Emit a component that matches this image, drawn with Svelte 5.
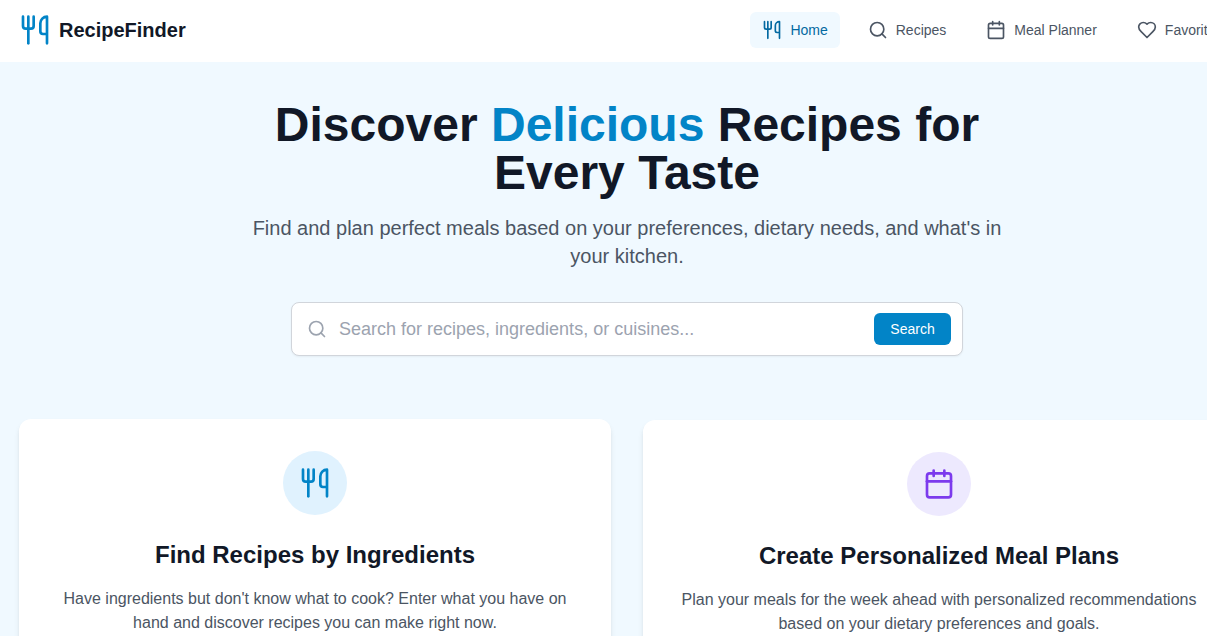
<script>
  const navItems = [
    { label: 'Home', icon: 'utensils', active: true },
    { label: 'Recipes', icon: 'search', active: false },
    { label: 'Meal Planner', icon: 'calendar', active: false },
    { label: 'Favorites', icon: 'heart', active: false }
  ];
</script>

{#snippet icon(name, size, cls)}
  <svg class={cls} width={size} height={size} viewBox="0 0 24 24" fill="none" stroke="currentColor" stroke-width="2" stroke-linecap="round" stroke-linejoin="round" aria-hidden="true">
    {#if name === 'utensils'}
      <path d="M3 2v7c0 1.1.9 2 2 2h4a2 2 0 0 0 2-2V2" />
      <path d="M7 2v20" />
      <path d="M21 15V2a5 5 0 0 0-5 5v6c0 1.1.9 2 2 2h3Zm0 0v7" />
    {:else if name === 'search'}
      <circle cx="11" cy="11" r="8" />
      <path d="m21 21-4.3-4.3" />
    {:else if name === 'calendar'}
      <path d="M8 2v4" />
      <path d="M16 2v4" />
      <rect width="18" height="18" x="3" y="4" rx="2" />
      <path d="M3 10h18" />
    {:else}
      <path d="M19 14c1.49-1.46 3-3.21 3-5.5A5.5 5.5 0 0 0 16.5 3c-1.76 0-3 .5-4.5 2-1.5-1.5-2.74-2-4.5-2A5.5 5.5 0 0 0 2 8.5c0 2.3 1.5 4.05 3 5.5l7 7Z" />
    {/if}
  </svg>
{/snippet}

<div class="viewport">
  <div class="page">
    <header class="topbar">
      <a class="brand" href="#home">
        {@render icon('utensils', 32, 'brand-icon')}
        <span>RecipeFinder</span>
      </a>
      <nav class="nav">
        {#each navItems as item}
          <a class="nav-link" class:active={item.active} href="#{item.label}">
            {@render icon(item.icon, 20, '')}
            <span>{item.label}</span>
          </a>
        {/each}
      </nav>
    </header>

    <main class="main">
      <section class="hero">
        <h1>Discover <span class="accent">Delicious</span> Recipes for Every Taste</h1>
        <p class="lead">Find and plan perfect meals based on your preferences, dietary needs, and what's in your kitchen.</p>
        <form class="search" onsubmit={(e) => e.preventDefault()}>
          {@render icon('search', 20, 'search-icon')}
          <input type="text" placeholder="Search for recipes, ingredients, or cuisines..." />
          <button type="submit">Search</button>
        </form>
      </section>

      <section class="cards">
        <article class="card">
          <div class="badge blue">{@render icon('utensils', 32, '')}</div>
          <h2>Find Recipes by Ingredients</h2>
          <p>Have ingredients but don't know what to cook? Enter what you have on hand and discover recipes you can make right now.</p>
        </article>
        <article class="card second">
          <div class="badge purple">{@render icon('calendar', 32, '')}</div>
          <h2>Create Personalized Meal Plans</h2>
          <p>Plan your meals for the week ahead with personalized recommendations based on your dietary preferences and goals.</p>
        </article>
      </section>
    </main>
  </div>
</div>

<style>
  :global(body) {
    margin: 0;
    background: #f0f9ff;
  }

  .viewport {
    width: 1207px;
    height: 636px;
    overflow: hidden;
  }

  .page {
    width: 1254px;
    font-family: "Liberation Sans", Arial, sans-serif;
    color: #111827;
  }

  .topbar {
    height: 62px;
    box-sizing: border-box;
    padding: 0 19.6px 2px 19px;
    display: flex;
    align-items: center;
    justify-content: space-between;
    background: #fff;
  }

  .brand {
    display: flex;
    align-items: center;
    gap: 8px;
    text-decoration: none;
    color: #111827;
    font-size: 20px;
    font-weight: 700;
  }

  .brand :global(.brand-icon) {
    color: #0284c7;
  }

  .nav {
    display: flex;
    gap: 16px;
  }

  .nav-link {
    display: flex;
    align-items: center;
    gap: 8px;
    height: 36px;
    padding: 0 12px;
    border-radius: 6px;
    font-size: 14px;
    color: #4b5563;
    text-decoration: none;
  }

  .nav-link.active {
    background: #f0f9ff;
    color: #0369a1;
  }

  .main {
    padding: 39px 19px 0;
  }

  .hero {
    text-align: center;
  }

  h1 {
    margin: 0 auto;
    max-width: 768px;
    font-size: 48px;
    line-height: 48px;
    font-weight: 700;
    color: #111827;
  }

  .accent {
    color: #0284c7;
  }

  .lead {
    margin: 17px auto 0;
    max-width: 768px;
    font-size: 20px;
    line-height: 28px;
    color: #4b5563;
  }

  .search {
    margin: 32px auto 0;
    width: 672px;
    height: 54px;
    box-sizing: border-box;
    padding: 0 11px 0 15px;
    display: flex;
    align-items: center;
    gap: 12px;
    background: #fff;
    border: 1px solid #d1d5db;
    border-radius: 8px;
    box-shadow: 0 1px 2px rgba(0, 0, 0, 0.05);
  }

  .search :global(.search-icon) {
    color: #9ca3af;
    flex: none;
  }

  input {
    flex: 1;
    min-width: 0;
    border: 0;
    outline: 0;
    padding: 0;
    background: transparent;
    font: inherit;
    font-size: 18px;
    color: #111827;
  }

  input::placeholder {
    color: #9ca3af;
    opacity: 1;
  }

  button {
    flex: none;
    width: 77px;
    height: 32px;
    border: 0;
    border-radius: 6px;
    background: #0284c7;
    color: #fff;
    font: inherit;
    font-size: 14px;
  }

  .cards {
    margin-top: 63px;
    display: grid;
    grid-template-columns: 1fr 1fr;
    gap: 32px;
    align-items: start;
  }

  .card {
    padding: 32px;
    background: #fff;
    border-radius: 12px;
    box-shadow: 0 4px 6px -1px rgba(0, 0, 0, 0.1), 0 2px 4px -2px rgba(0, 0, 0, 0.1);
    text-align: center;
  }

  .second {
    margin-top: 1px;
  }

  .badge {
    width: 64px;
    height: 64px;
    margin: 0 auto 24px;
    border-radius: 50%;
    display: flex;
    align-items: center;
    justify-content: center;
  }

  .blue {
    background: #e0f2fe;
    color: #0284c7;
  }

  .purple {
    background: #ede9fe;
    color: #7c3aed;
  }

  h2 {
    margin: 0 0 16px;
    font-size: 24px;
    line-height: 32px;
    font-weight: 700;
    color: #111827;
  }

  .card p {
    margin: 0;
    font-size: 16px;
    line-height: 24px;
    color: #4b5563;
  }
</style>
